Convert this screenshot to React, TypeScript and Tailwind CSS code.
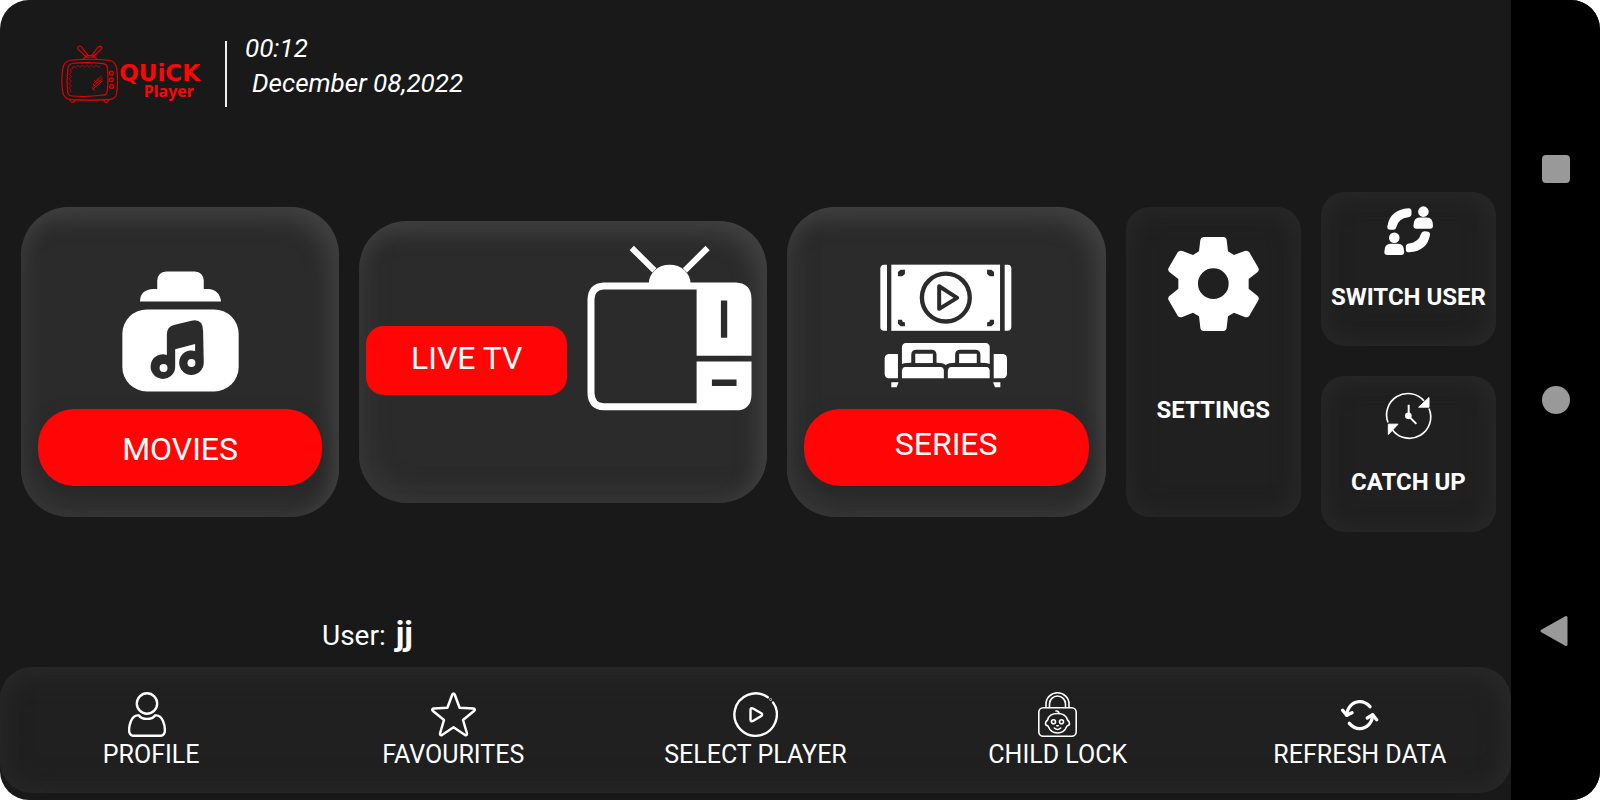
import type { ReactNode } from "react";

const raised =
  "rounded-[48px] bg-[#2b2b2b] shadow-[inset_-10px_12px_20px_#404040,inset_10px_-12px_20px_#353535]";
const panel =
  "rounded-3xl bg-[#202020] shadow-[inset_-6px_4px_24px_#282828,inset_6px_-4px_24px_#262626]";

function LogoTv() {
  return (
    <svg viewBox="182 136 172 176" className="h-[59px] w-[57px]" fill="none" stroke="#e60000" strokeWidth="3.5" strokeLinecap="round" strokeLinejoin="round" aria-hidden="true">
      <path d="M256 169 L234 148 Q230 139 239 138 Q244 138 247 145 L262 165" />
      <path d="M280 169 L304 148 Q308 139 300 138 Q294 138 291 145 L276 165" />
      <path d="M249 177 Q252 170 262 167 H276 Q286 170 290 177 M253 172 H286" />
      <path d="M210 181 Q269 175 327 181 Q346 184 350 205 Q355 243 350 281 Q347 299 326 300 Q268 303 212 300 Q193 298 188 280 Q181 243 188 204 Q192 184 210 181 Z" />
      <path d="M218 190 Q265 186 309 191 Q321 193 322 204 Q326 243 321 277 Q319 286 308 286 Q264 293 216 289 Q203 288 202 277 Q198 242 203 205 Q205 193 218 190 Z" />
      <path d="M208 278 l5 -7 -6 -6 6 -7 -6 -7 6 -7 -6 -7 6 -7 -6 -7 7 -6 -5 -7 8 -4 2 -7 8 4 6 -7 6 6 7 -6 7 6 7 -6 7 6 7 -6 7 6 7 -6 7 6 6 -4" strokeWidth="2.2" />
      <path d="M304 229 l-22 21 M307 236 l-28 24 M306 244 l-28 24 M283 242 l7 9 M291 236 l9 10 M279 253 l9 9 M276 263 l7 9" strokeWidth="3" />
      <circle cx="334" cy="220" r="6" />
      <circle cx="334" cy="240" r="6" />
      <circle cx="335" cy="260" r="6" />
      <path d="M332 218 l4 4 M332 238 l4 4 M333 258 l4 4" strokeWidth="2.2" />
      <path d="M208 300 l5 7 q6 3 9 -2 l2 -4 M311 301 l4 6 q4 4 7 0 l4 -7" />
    </svg>
  );
}

function MoviesIcon() {
  return (
    <svg viewBox="333 228 352 363" className="h-[121px] w-[117px] shrink-0" fill="#fff" aria-hidden="true">
      <path d="M387 319 Q388 283 428 282 H439 V256 Q441 231 466 229 H552 Q577 231 579 256 V282 H592 Q626 284 631 319 Z" />
      <rect x="334" y="343" width="350" height="247" rx="74" />
      <path fill="#2b2b2b" d="M468 418 Q468 396 489 390 L542 377 Q577 370 577 408 L579 503 A37 37 0 1 1 553 468 V447 L493 463 V516 A37 37 0 1 1 468 480 Z" />
      <circle cx="458" cy="519" r="12" />
      <circle cx="542" cy="504" r="12" />
    </svg>
  );
}

function LiveTvIcon() {
  return (
    <svg viewBox="710 108 495 496" className="mt-[25px] size-[165px] shrink-0 overflow-visible" fill="#fff" aria-hidden="true">
      <path d="M844 114 L912 181 M1072 114 L1004 181" stroke="#fff" strokeWidth="18" fill="none" />
      <path d="M895 222 A63 58 0 0 1 1021 222 Z" />
      <path fillRule="evenodd" d="M760 218 H1157 Q1204 220 1204 268 V438 H1039 V239 H760 Q733 240 732 268 V550 Q733 580 760 581 H1039 V455 H1204 V555 Q1203 602 1157 602 H760 Q712 600 711 550 V268 Q713 220 760 218 Z M1112 272 V384 H1131 V272 Z M1085 509 V529 H1159 V509 Z" />
    </svg>
  );
}

function SeriesIcon() {
  return (
    <svg viewBox="300 207 397 371" className="h-[124px] w-[132px] shrink-0" fill="#fff" aria-hidden="true">
      <path d="M312 208 H321 V407 H312 Q301 406 301 396 V219 Q302 209 312 208 Z M675 208 H684 Q695 209 695 219 V396 Q694 406 684 407 H675 Z" />
      <rect x="334" y="208" width="327" height="199" />
      <path fill="#2b2b2b" d="M375 223 V236 L367 243 H354 V230 L362 223 Z M622 223 H635 L643 230 V243 H630 L622 236 Z M354 374 H367 V379 L375 382 V393 H362 L354 386 Z M643 374 H630 V379 L622 382 V393 H635 L643 386 Z" />
      <circle cx="498" cy="307" r="72" fill="none" stroke="#2b2b2b" strokeWidth="13" />
      <path d="M478 273 V341 L532 308 Z" fill="none" stroke="#2b2b2b" strokeWidth="12" strokeLinejoin="round" />
      <path d="M326 477 H354 V550 H326 Q315 549 314 537 V490 Q315 478 326 477 Z M642 477 H670 Q681 478 682 490 V537 Q681 549 670 550 H642 Z" />
      <path d="M378 444 H618 Q629 445 630 456 V507 Q622 503 602 503 V478 Q601 464 587 464 H541 Q527 464 526 478 V503 Q506 503 498 510 Q490 503 470 503 V478 Q469 464 455 464 H409 Q395 464 394 478 V503 Q374 503 366 507 V456 Q367 445 378 444 Z" />
      <rect x="406" y="476" width="53" height="28" />
      <rect x="538" y="476" width="53" height="28" />
      <path d="M376 516 H482 Q492 517 492 527 V550 H366 V527 Q367 517 376 516 Z M514 516 H620 Q629 517 630 527 V550 H504 V527 Q505 517 514 516 Z" />
      <path d="M334 562 H356 L350 577 H334 Z M640 562 H662 V577 H646 Z" />
    </svg>
  );
}

function GearIcon() {
  return (
    <svg viewBox="159 171 273 282" className="h-[94px] w-[91px] shrink-0" fill="#fff" fillRule="evenodd" aria-hidden="true">
      <path d="M265 171 H325 Q334 172 335 180 L339 214 L357 225 L389 213 Q398 210 403 217 L430 263 Q434 271 427 277 L401 297 V326 L427 347 Q434 353 430 361 L403 407 Q398 414 389 411 L357 398 L339 409 L335 443 Q334 452 325 453 H265 Q257 452 256 443 L252 409 L234 398 L202 411 Q193 414 188 407 L161 361 Q157 353 164 347 L190 326 V297 L164 277 Q157 271 161 263 L188 217 Q193 210 202 213 L234 225 L252 214 L256 180 Q257 172 265 171 Z M295 265 A46 46 0 1 0 295 357 A46 46 0 1 0 295 265 Z" />
    </svg>
  );
}

function SwitchUserIcon() {
  return (
    <svg viewBox="806 77 148 148" className="size-[49px] shrink-0" fill="#fff" aria-hidden="true">
      <path d="M826 149 Q815 149 816 139 Q824 88 880 84 Q889 84 889 92 V102 Q888 110 879 111 Q850 114 843 141 Q841 149 832 149 Z" />
      <path d="M935 154 Q945 154 945 163 Q938 212 882 217 Q872 217 872 209 V199 Q873 191 882 190 Q910 187 918 161 Q920 153 928 153 Z" />
      <circle cx="925" cy="94" r="16" />
      <path d="M895 137 Q895 112 914 112 H935 Q954 112 954 137 Q954 146 945 146 H904 Q895 146 895 137 Z" />
      <circle cx="837" cy="173" r="16" />
      <path d="M807 216 Q807 191 826 191 H848 Q867 191 867 216 Q867 225 858 225 H816 Q807 225 807 216 Z" />
    </svg>
  );
}

function CatchUpIcon() {
  return (
    <svg viewBox="813 638 135 134" className="size-[45px] shrink-0 overflow-visible" fill="none" stroke="#fff" strokeWidth="5" aria-hidden="true">
      <path d="M819 726 A64 64 0 0 1 927 661" />
      <path d="M942 684 A64 64 0 0 1 833 749" />
      <path d="M942 651 V680 H911 Z M820 762 V731 H849 Z" fill="#fff" strokeWidth="3" />
      <circle cx="880" cy="706" r="10" fill="#fff" stroke="none" />
      <path d="M881 706 V673 M880 706 L904 730" strokeWidth="6" />
    </svg>
  );
}

function ProfileIcon() {
  return (
    <svg viewBox="0 0 46 45" className="h-[45px] w-[46px]" fill="none" stroke="#fff" strokeWidth="2.4" aria-hidden="true">
      <circle cx="19" cy="11.5" r="10.2" />
      <path d="M11 23.5 C14 28 24 28 27 23.5 Q32 22.5 35 29 Q37.500 35 36.700 40 Q36 43.800 32 43.800 H6 Q2 43.800 1.300 40 Q.5 35 3 29 Q6 22.500 11 23.500 Z" strokeLinejoin="round" />
    </svg>
  );
}

function StarIcon() {
  return (
    <svg viewBox="0 0 45 45" className="size-[45px]" fill="none" stroke="#fff" strokeWidth="2.5" strokeLinejoin="round" aria-hidden="true">
      <path d="M21.300 2.500 Q22.500 .500 23.700 2.500 L28.600 15.700 L42.500 16.400 Q44.800 17.200 43 19 L32 28 L36 41.500 Q36 43.800 34 43 L22.500 35.300 L11 43 Q9 43.800 9 41.500 L13 28 L2 19 Q.2 17.200 2.500 16.400 L16.400 15.700 Z" />
    </svg>
  );
}

function PlayerIcon() {
  return (
    <svg viewBox="0 0 45 45" className="size-[45px]" fill="none" stroke="#fff" strokeWidth="2.4" strokeLinecap="round" strokeLinejoin="round" aria-hidden="true">
      <path d="M34.800 5.200 A21.200 21.200 0 1 0 40 10.400" />
      <circle cx="37.600" cy="7.500" r=".3" strokeWidth="2" />
      <path d="M17.500 18 Q17.500 15.500 20 16.500 L28.300 21.300 Q30 22.700 28.300 24 L20 29 Q17.500 30 17.500 27.500 Z" />
    </svg>
  );
}

function ChildLockIcon() {
  return (
    <svg viewBox="0 0 39 45" className="h-[45px] w-[39px]" fill="none" stroke="#fff" strokeWidth="1.600" strokeLinecap="round" strokeLinejoin="round" aria-hidden="true">
      <path d="M8 15.500 V12 A11.500 11.200 0 0 1 31 12 V15.500" />
      <path d="M11.500 15.500 V12 A8 8 0 0 1 27.500 12 V15.500" />
      <rect x=".8" y="15.700" width="37.400" height="28.500" rx="4.500" />
      <path d="M19.500 21.500 C25 21.500 28.500 24 29.500 28 Q31.500 29.500 31.500 31.500 Q31.500 33.500 29 34 C27 39 23.500 41 19.500 41 C15.500 41 12 39 10 34 Q7.500 33.500 7.500 31.500 Q7.500 29.500 9.500 28 C10.500 24 14 21.500 19.500 21.500 Z" />
      <path d="M21 21.500 Q20.500 18.500 18 19" />
      <circle cx="15.500" cy="29.800" r="2" />
      <circle cx="23.500" cy="29.800" r="2" />
      <path d="M18.800 33.700 h1.400 M16.300 36 Q19.500 39 22.700 36" />
    </svg>
  );
}

function RefreshIcon() {
  return (
    <svg viewBox="484 281 114 126" className="h-[42px] w-[38px]" fill="none" stroke="#fff" strokeWidth="10" strokeLinecap="round" strokeLinejoin="round" aria-hidden="true">
      <path d="M571 319 Q556 303 539 304 C518 305 502 322 502 345" />
      <path d="M489 330 L501 345 L517 337" />
      <path d="M509 369 Q523 385 540 385 C562 384 578 367 579 344" />
      <path d="M563 353 L579 343 L591 358" />
    </svg>
  );
}

function MediaCard({ label, className, pillClass, icon }: { label: string; className: string; pillClass: string; icon: ReactNode }) {
  return (
    <button type="button" className={`flex h-[310px] flex-col items-center justify-between px-[17px] pb-[31px] ${raised} ${className}`}>
      {icon}
      <span className={`flex h-[77px] w-full items-center justify-center rounded-[36px] bg-[#ff0505] text-[32px] leading-10 shadow-[0_6px_16px_#282828] ${pillClass}`}>
        {label}
      </span>
    </button>
  );
}

const actions = [
  { label: "PROFILE", icon: <ProfileIcon /> },
  { label: "FAVOURITES", icon: <StarIcon /> },
  { label: "SELECT PLAYER", icon: <PlayerIcon /> },
  { label: "CHILD LOCK", icon: <ChildLockIcon /> },
  { label: "REFRESH DATA", icon: <RefreshIcon /> },
];

export default function App() {
  return (
    <div className="bg-white font-['Roboto',sans-serif] text-white">
      <div className="flex min-h-screen overflow-hidden rounded-[29px] bg-[#191919]">
        <div className="flex min-w-0 flex-1 flex-col pb-[7px]">
          <header className="flex h-27 items-start pl-[61px]">
            <div className="mt-[45px] flex gap-0.5">
              <LogoTv />
              <div className="flex w-20 flex-col items-end pt-[18px] font-bold text-[#ff0505]">
                <span className="font-['DejaVu_Sans',sans-serif] text-[23px] leading-5">QUiCK</span>
                <span className="pr-1.5 font-['Noto_Sans',sans-serif] text-base leading-4">Player</span>
              </div>
            </div>
            <div className="mt-[41px] ml-[25px] h-[66px] w-0.5 bg-[#eeeeee]" />
            <div className="mt-[31px] ml-[18px] flex flex-col text-[26px] leading-[35px] italic">
              <time>00:12</time>
              <time dateTime="2022-12-08" className="pl-[7px]">December 08,2022</time>
            </div>
          </header>

          <main className="grid flex-1 grid-cols-[318fr_407fr_319fr_175fr_175fr] items-center gap-5 pr-[15px] pl-[21px]">
            <MediaCard label="MOVIES" className="pt-16" pillClass="pt-0.5" icon={<MoviesIcon />} />
            <button type="button" className={`flex h-[282px] items-start justify-between pr-[15px] pl-[7px] ${raised}`}>
              <span className="mt-[105px] flex h-[69px] w-[201px] items-center justify-center rounded-[18px] bg-[#ff0505] pb-1.5 text-[32px] leading-10">
                LIVE TV
              </span>
              <LiveTvIcon />
            </button>
            <MediaCard label="SERIES" className="pt-[57px]" pillClass="pb-2" icon={<SeriesIcon />} />
            <button type="button" className={`flex h-[310px] flex-col items-center gap-16 pt-[30px] text-2xl leading-[30px] font-bold ${panel}`}>
              <GearIcon />
              SETTINGS
            </button>
            <div className="flex flex-col gap-[30px] text-2xl leading-[30px] font-bold">
              <button type="button" className={`flex h-[154px] flex-col items-center gap-[27px] pt-3.5 whitespace-nowrap ${panel}`}>
                <SwitchUserIcon />
                SWITCH USER
              </button>
              <button type="button" className={`flex h-[156px] flex-col items-center gap-[29px] pt-[17px] ${panel}`}>
                <CatchUpIcon />
                CATCH UP
              </button>
            </div>
          </main>

          <p className="mb-[15px] flex h-9 items-baseline gap-2.5 pl-[322px] text-[28px] leading-9">
            User: <strong className="text-[33px] font-bold">jj</strong>
          </p>

          <nav className="grid h-[126px] grid-cols-5 rounded-[32px] bg-[#202020] shadow-[inset_-6px_8px_24px_#292929,inset_6px_-8px_24px_#262626]">
            {actions.map(({ label, icon }) => (
              <button key={label} type="button" className="flex flex-col items-center gap-[3px] pt-[25px] text-[25px] leading-[30px] whitespace-nowrap">
                <span className="flex h-[45px] items-center">{icon}</span>
                {label}
              </button>
            ))}
          </nav>
        </div>

        <aside className="flex w-[89px] flex-col items-center justify-center gap-[203px] bg-black">
          <button type="button" aria-label="Recent apps" className="size-7 rounded-sm bg-[#999999]" />
          <button type="button" aria-label="Home" className="size-7 rounded-full bg-[#999999]" />
          <button type="button" aria-label="Back">
            <svg viewBox="0 0 28 28" className="size-7 overflow-visible" fill="#999" stroke="#999" strokeWidth="3" strokeLinejoin="round" aria-hidden="true">
              <path d="M0 14 L24 .500 V27.500 Z" />
            </svg>
          </button>
        </aside>
      </div>
    </div>
  );
}
